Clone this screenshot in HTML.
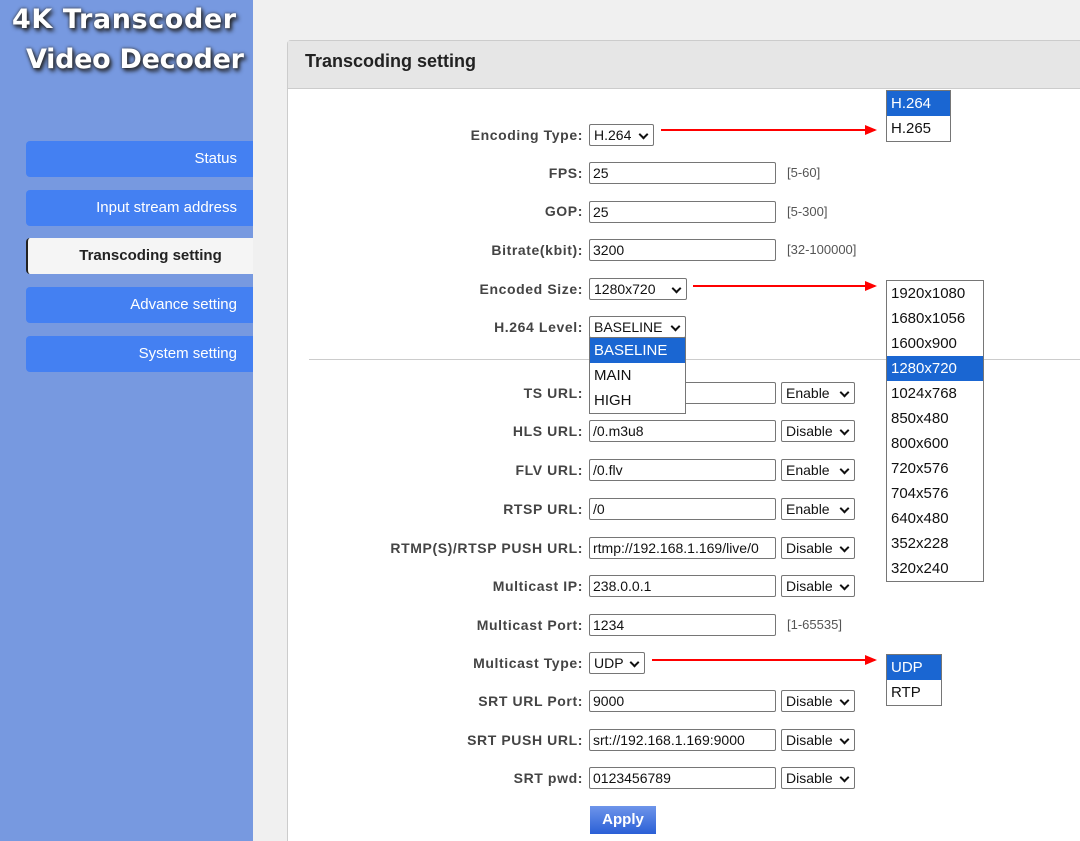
<!DOCTYPE html>
<html style="width:1080px;height:841px;overflow:hidden"><head><meta charset="utf-8"><style>
*{box-sizing:border-box;margin:0;padding:0}
body{width:1080px;height:841px;overflow:hidden;background:#f0f0f0;font-family:"Liberation Sans",Arial,sans-serif;position:relative}
.sb{position:absolute;left:0;top:0;width:253px;height:841px;background:#7799e0}
.logo{position:absolute;color:#fff;font-family:"DejaVu Sans",sans-serif;font-weight:bold;font-size:27px;text-shadow:2px 3px 4px #222,0 0 3px #333;white-space:nowrap}
.nav{position:absolute;left:26px;width:227px;height:36px;background:#4480f2;color:#fff;font-size:15px;text-align:right;padding-right:16px;line-height:36px;border-radius:4px 0 0 4px}
.nav.act{background:#f5f5f5;color:#222;font-weight:bold;text-align:center;padding-right:0;border-left:2px solid #222;padding-left:20px}
.panel{position:absolute;left:287px;top:40px;width:800px;height:801px;background:#fff;border:1px solid #ccc;border-bottom:none;border-radius:4px 0 0 0}
.ph{position:absolute;left:0;top:0;right:0;height:48px;background:#e6e6e6;border-bottom:1px solid #ccc;font-weight:bold;font-size:18px;color:#222;padding:10px 0 0 17px}
.l{position:absolute;left:0;width:583px;text-align:right;font-weight:bold;font-size:14px;letter-spacing:0.6px;color:#444;height:18px;line-height:18px}
.i{position:absolute;left:589px;width:187px;height:22px;border:1px solid #767676;border-radius:2px;font-size:14px;line-height:20px;padding-left:3px;color:#111;background:#fff;white-space:nowrap;overflow:hidden}
.s{position:absolute;height:22px;border:1px solid #767676;border-radius:2px;font-size:14px;line-height:20px;padding-left:4px;color:#111;background:#fff}
.s:after{content:"";position:absolute;right:6px;top:6px;width:5px;height:5px;border-right:2px solid #111;border-bottom:2px solid #111;transform:rotate(45deg)}
.h{position:absolute;left:787px;font-size:13px;color:#555;height:18px;line-height:18px}
.dd{position:absolute;background:#fff;border:1px solid #767676;font-size:15px;color:#111}
.dd div{height:25px;line-height:25px;padding-left:4px}
.dd .sel{background:#1a66d2;color:#fff}
.ar{position:absolute;height:2px;background:#f00}
.ar:after{content:"";position:absolute;right:-2px;top:-4px;border-left:12px solid #f00;border-top:5px solid transparent;border-bottom:5px solid transparent}
</style></head><body>
<div class="sb">
<div class="logo" style="left:12px;top:4px;letter-spacing:0.6px">4K Transcoder</div>
<div class="logo" style="left:26px;top:44px;letter-spacing:-0.3px">Video Decoder</div>
<div class="nav" style="top:141px">Status</div>
<div class="nav" style="top:190px">Input stream address</div>
<div class="nav act" style="top:238px">Transcoding setting</div>
<div class="nav" style="top:287px">Advance setting</div>
<div class="nav" style="top:336px">System setting</div>
</div>
<div class="panel"><div class="ph">Transcoding setting</div></div>
<div style="position:absolute;left:309px;top:359px;width:771px;height:1px;background:#ccc"></div>

<div class="l" style="top:126px">Encoding Type:</div><div class="s" style="left:589px;top:124px;width:65px">H.264</div>
<div class="l" style="top:164px">FPS:</div><div class="i" style="top:162px">25</div><div class="h" style="top:164px">[5-60]</div>
<div class="l" style="top:202px">GOP:</div><div class="i" style="top:201px">25</div><div class="h" style="top:203px">[5-300]</div>
<div class="l" style="top:241px">Bitrate(kbit):</div><div class="i" style="top:239px">3200</div><div class="h" style="top:241px">[32-100000]</div>
<div class="l" style="top:280px">Encoded Size:</div><div class="s" style="left:589px;top:278px;width:98px">1280x720</div>
<div class="l" style="top:318px">H.264 Level:</div><div class="s" style="left:589px;top:316px;width:97px">BASELINE</div>

<div class="l" style="top:384px">TS URL:</div><div class="i" style="top:382px"></div><div class="s" style="left:781px;top:382px;width:74px">Enable</div>
<div class="l" style="top:422px">HLS URL:</div><div class="i" style="top:420px">/0.m3u8</div><div class="s" style="left:781px;top:420px;width:74px">Disable</div>
<div class="l" style="top:461px">FLV URL:</div><div class="i" style="top:459px">/0.flv</div><div class="s" style="left:781px;top:459px;width:74px">Enable</div>
<div class="l" style="top:500px">RTSP URL:</div><div class="i" style="top:498px">/0</div><div class="s" style="left:781px;top:498px;width:74px">Enable</div>
<div class="l" style="top:539px">RTMP(S)/RTSP PUSH URL:</div><div class="i" style="top:537px">rtmp://192.168.1.169/live/0</div><div class="s" style="left:781px;top:537px;width:74px">Disable</div>
<div class="l" style="top:577px">Multicast IP:</div><div class="i" style="top:575px">238.0.0.1</div><div class="s" style="left:781px;top:575px;width:74px">Disable</div>
<div class="l" style="top:616px">Multicast Port:</div><div class="i" style="top:614px">1234</div><div class="h" style="top:616px">[1-65535]</div>
<div class="l" style="top:654px">Multicast Type:</div><div class="s" style="left:589px;top:652px;width:56px">UDP</div>
<div class="l" style="top:692px">SRT URL Port:</div><div class="i" style="top:690px">9000</div><div class="s" style="left:781px;top:690px;width:74px">Disable</div>
<div class="l" style="top:731px">SRT PUSH URL:</div><div class="i" style="top:729px">srt://192.168.1.169:9000</div><div class="s" style="left:781px;top:729px;width:74px">Disable</div>
<div class="l" style="top:769px">SRT pwd:</div><div class="i" style="top:767px">0123456789</div><div class="s" style="left:781px;top:767px;width:74px">Disable</div>
<div style="position:absolute;left:590px;top:806px;width:66px;height:28px;background:linear-gradient(#6e95ea,#2a5fd6);color:#fff;font-weight:bold;font-size:15px;text-align:center;line-height:28px">Apply</div>

<div class="dd" style="left:589px;top:337px;width:97px"><div class="sel">BASELINE</div><div>MAIN</div><div>HIGH</div></div>
<div class="dd" style="left:886px;top:90px;width:65px"><div class="sel">H.264</div><div>H.265</div></div>
<div class="dd" style="left:886px;top:280px;width:98px"><div>1920x1080</div><div>1680x1056</div><div>1600x900</div><div class="sel">1280x720</div><div>1024x768</div><div>850x480</div><div>800x600</div><div>720x576</div><div>704x576</div><div>640x480</div><div>352x228</div><div>320x240</div></div>
<div class="dd" style="left:886px;top:654px;width:56px"><div class="sel">UDP</div><div>RTP</div></div>

<div class="ar" style="left:661px;top:129px;width:214px"></div>
<div class="ar" style="left:693px;top:285px;width:182px"></div>
<div class="ar" style="left:652px;top:659px;width:223px"></div>
</body></html>
